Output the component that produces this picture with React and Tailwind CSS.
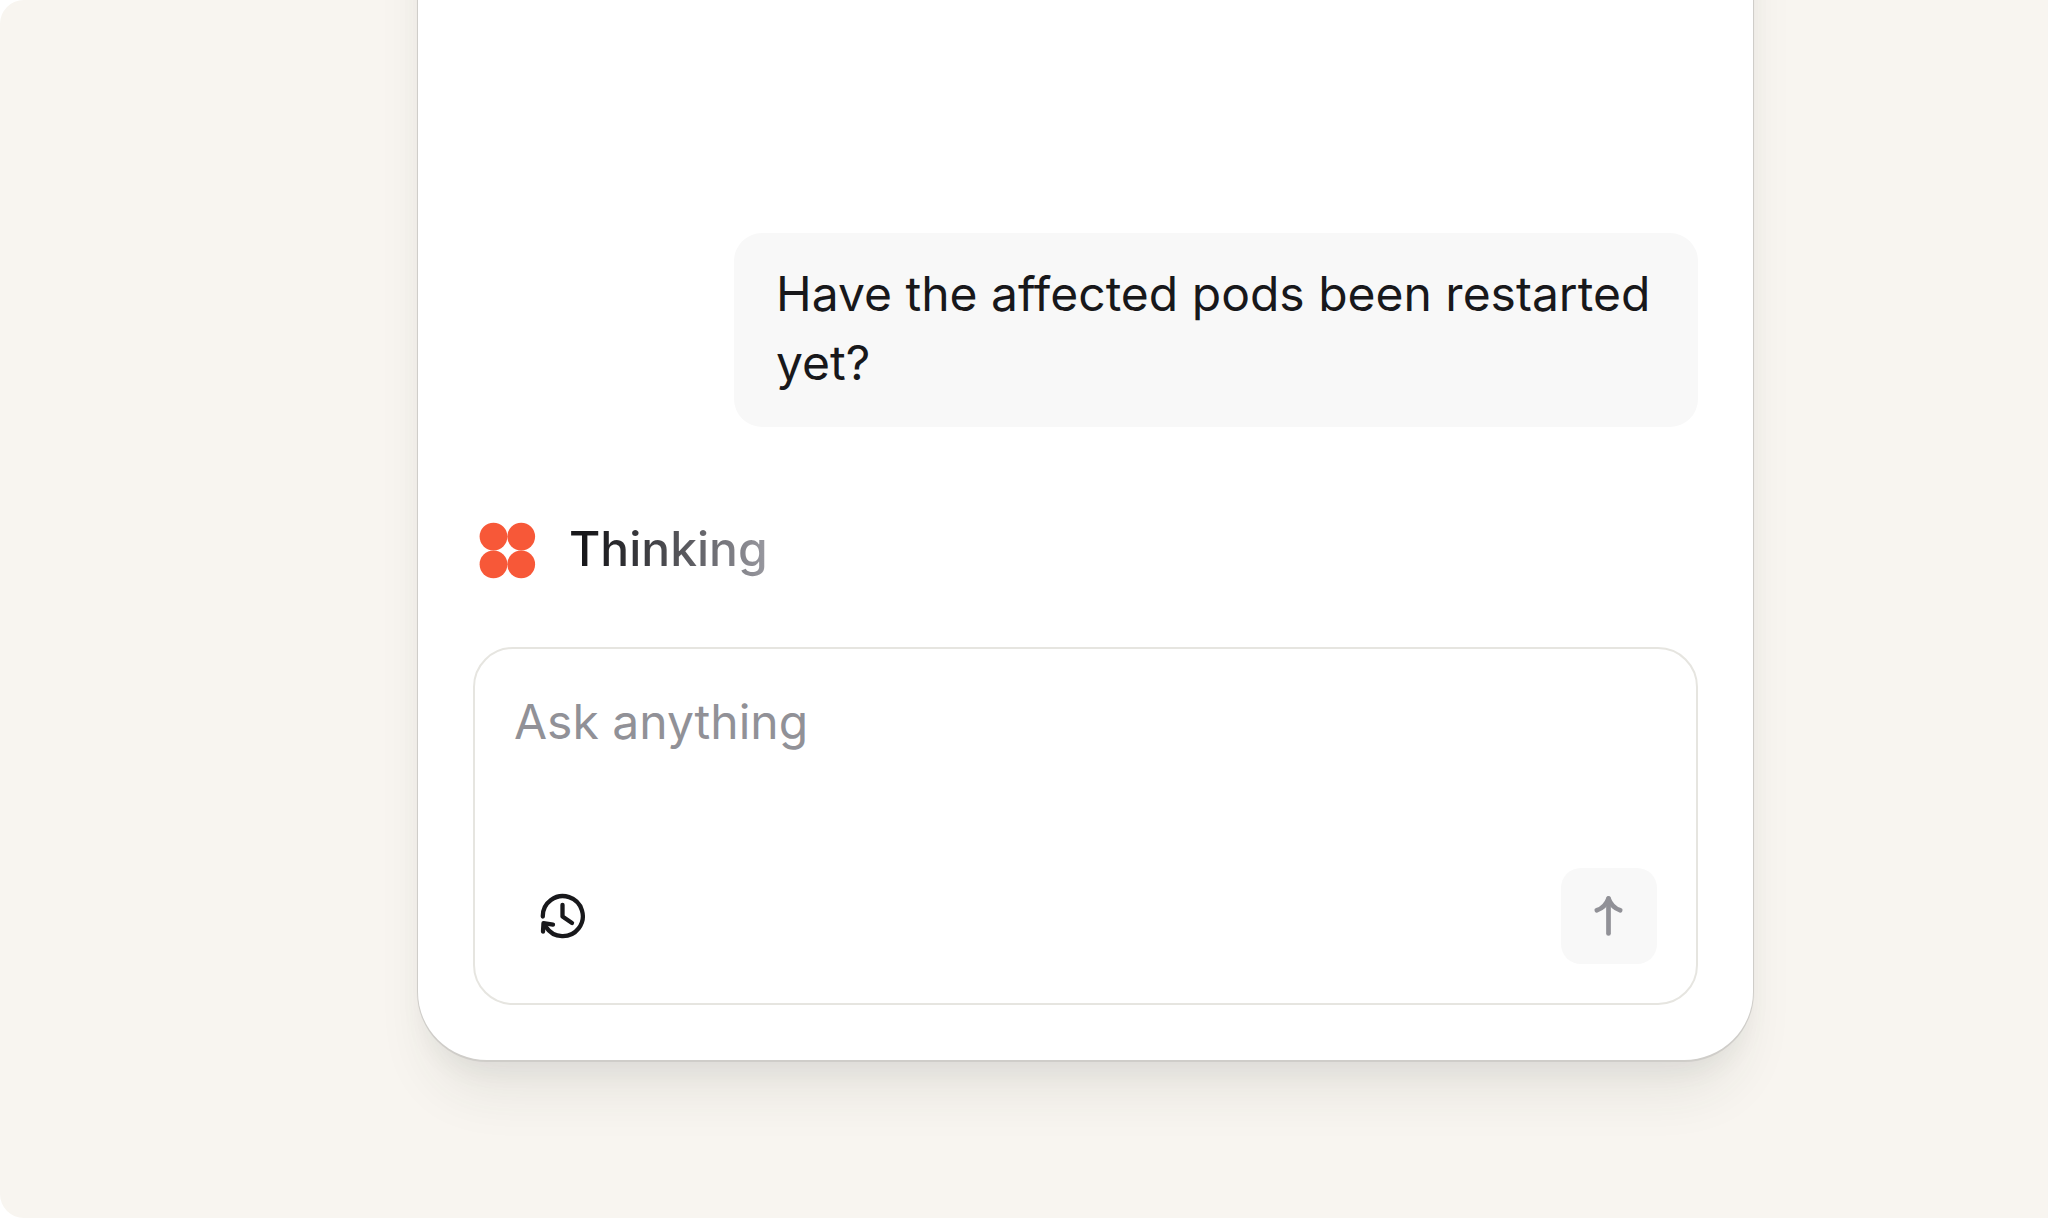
import React, { useState } from "react";

function Logo() {
  return (
    <svg viewBox="0 0 70 70" className="size-[70px]" fill="#f75838" aria-hidden="true">
      <circle cx="20.500" cy="23.600" r="13.900" />
      <circle cx="48.200" cy="23.600" r="13.900" />
      <circle cx="20.500" cy="51.300" r="13.900" />
      <circle cx="48.200" cy="51.300" r="13.900" />
    </svg>
  );
}

function HistoryIcon() {
  return (
    <svg
      viewBox="0 0 48 48"
      className="size-12"
      fill="none"
      stroke="#18181b"
      strokeWidth="4.300"
      strokeLinecap="round"
      strokeLinejoin="round"
      aria-hidden="true"
    >
      <path d="M4.800 24.500A20 20 0 1 1 8 35" />
      <path d="M24.500 12.800V24.500L34 31" />
      <path d="M5 39.500L5.500 31.200L15 32.700" />
    </svg>
  );
}

function ArrowIcon() {
  return (
    <svg
      viewBox="0 0 48 48"
      className="size-12"
      fill="none"
      stroke="#919197"
      strokeWidth="4.700"
      strokeLinecap="round"
      strokeLinejoin="round"
      aria-hidden="true"
    >
      <path d="M23.500 6.500V41.500" />
      <path d="M11.800 18.300C17.300 16.500 21.500 12 23.500 6.500C25.500 12 29.700 16.500 35.200 18.300" />
      <path d="M23.500 6.500L20.500 13L26.500 13Z" fill="#919197" strokeWidth="2" />
    </svg>
  );
}

function Message({ children }) {
  return (
    <div className="flex justify-end">
      <p className="max-w-[964px] rounded-[28px] bg-[#f8f8f8] px-[42px] pt-[26px] pb-[30px] text-[48px] leading-[69px] text-[#18181b]">
        {children}
      </p>
    </div>
  );
}

function Thinking() {
  return (
    <div className="flex items-center gap-[26px]">
      <Logo />
      <span className="bg-linear-to-r from-[#18181b] from-10% to-[#9a9aa1] bg-clip-text text-[48px] leading-[69px] font-medium text-transparent">
        Thinking
      </span>
    </div>
  );
}

function Composer() {
  const [text, setText] = useState("");

  return (
    <form
      onSubmit={(e) => e.preventDefault()}
      className="flex flex-col rounded-[40px] border-2 border-[#e6e5e0] bg-white px-[39px] pt-[38px] pb-[39px]"
    >
      <textarea
        aria-label="Message"
        placeholder="Ask anything"
        value={text}
        onChange={(e) => setText(e.target.value)}
        className="h-[181px] w-full resize-none text-[48px] leading-[69px] text-[#18181b] outline-none placeholder:text-[#919197]"
      />
      <div className="flex items-center justify-between">
        <button
          type="button"
          aria-label="History"
          className="flex size-24 items-center justify-center rounded-[20px]"
        >
          <HistoryIcon />
        </button>
        <button
          type="submit"
          aria-label="Send"
          className="flex size-24 items-center justify-center rounded-[20px] bg-[#f8f8f8]"
        >
          <ArrowIcon />
        </button>
      </div>
    </form>
  );
}

function App() {
  return (
    <div className="bg-white font-['Inter',sans-serif]">
      <main className="flex min-h-screen flex-col overflow-hidden rounded-l-3xl bg-[#f8f5f0] pr-[294px] pb-[156px] pl-[417px]">
        {/* the panel starts above the frame so only its lower edge shows */}
        <section className="-mt-32 flex flex-1 flex-col justify-end rounded-b-[70px] border-x border-b-2 border-[#cfcdc9] bg-white px-[55px] pb-[55px] shadow-[0_14px_28px_-8px_rgba(40,50,45,0.06),0_42px_56px_-14px_rgba(40,50,45,0.09)]">
          <Message>Have the affected pods been restarted yet?</Message>
          <div className="pt-[86px] pb-[64px]">
            <Thinking />
          </div>
          <Composer />
        </section>
      </main>
    </div>
  );
}

export default App;
